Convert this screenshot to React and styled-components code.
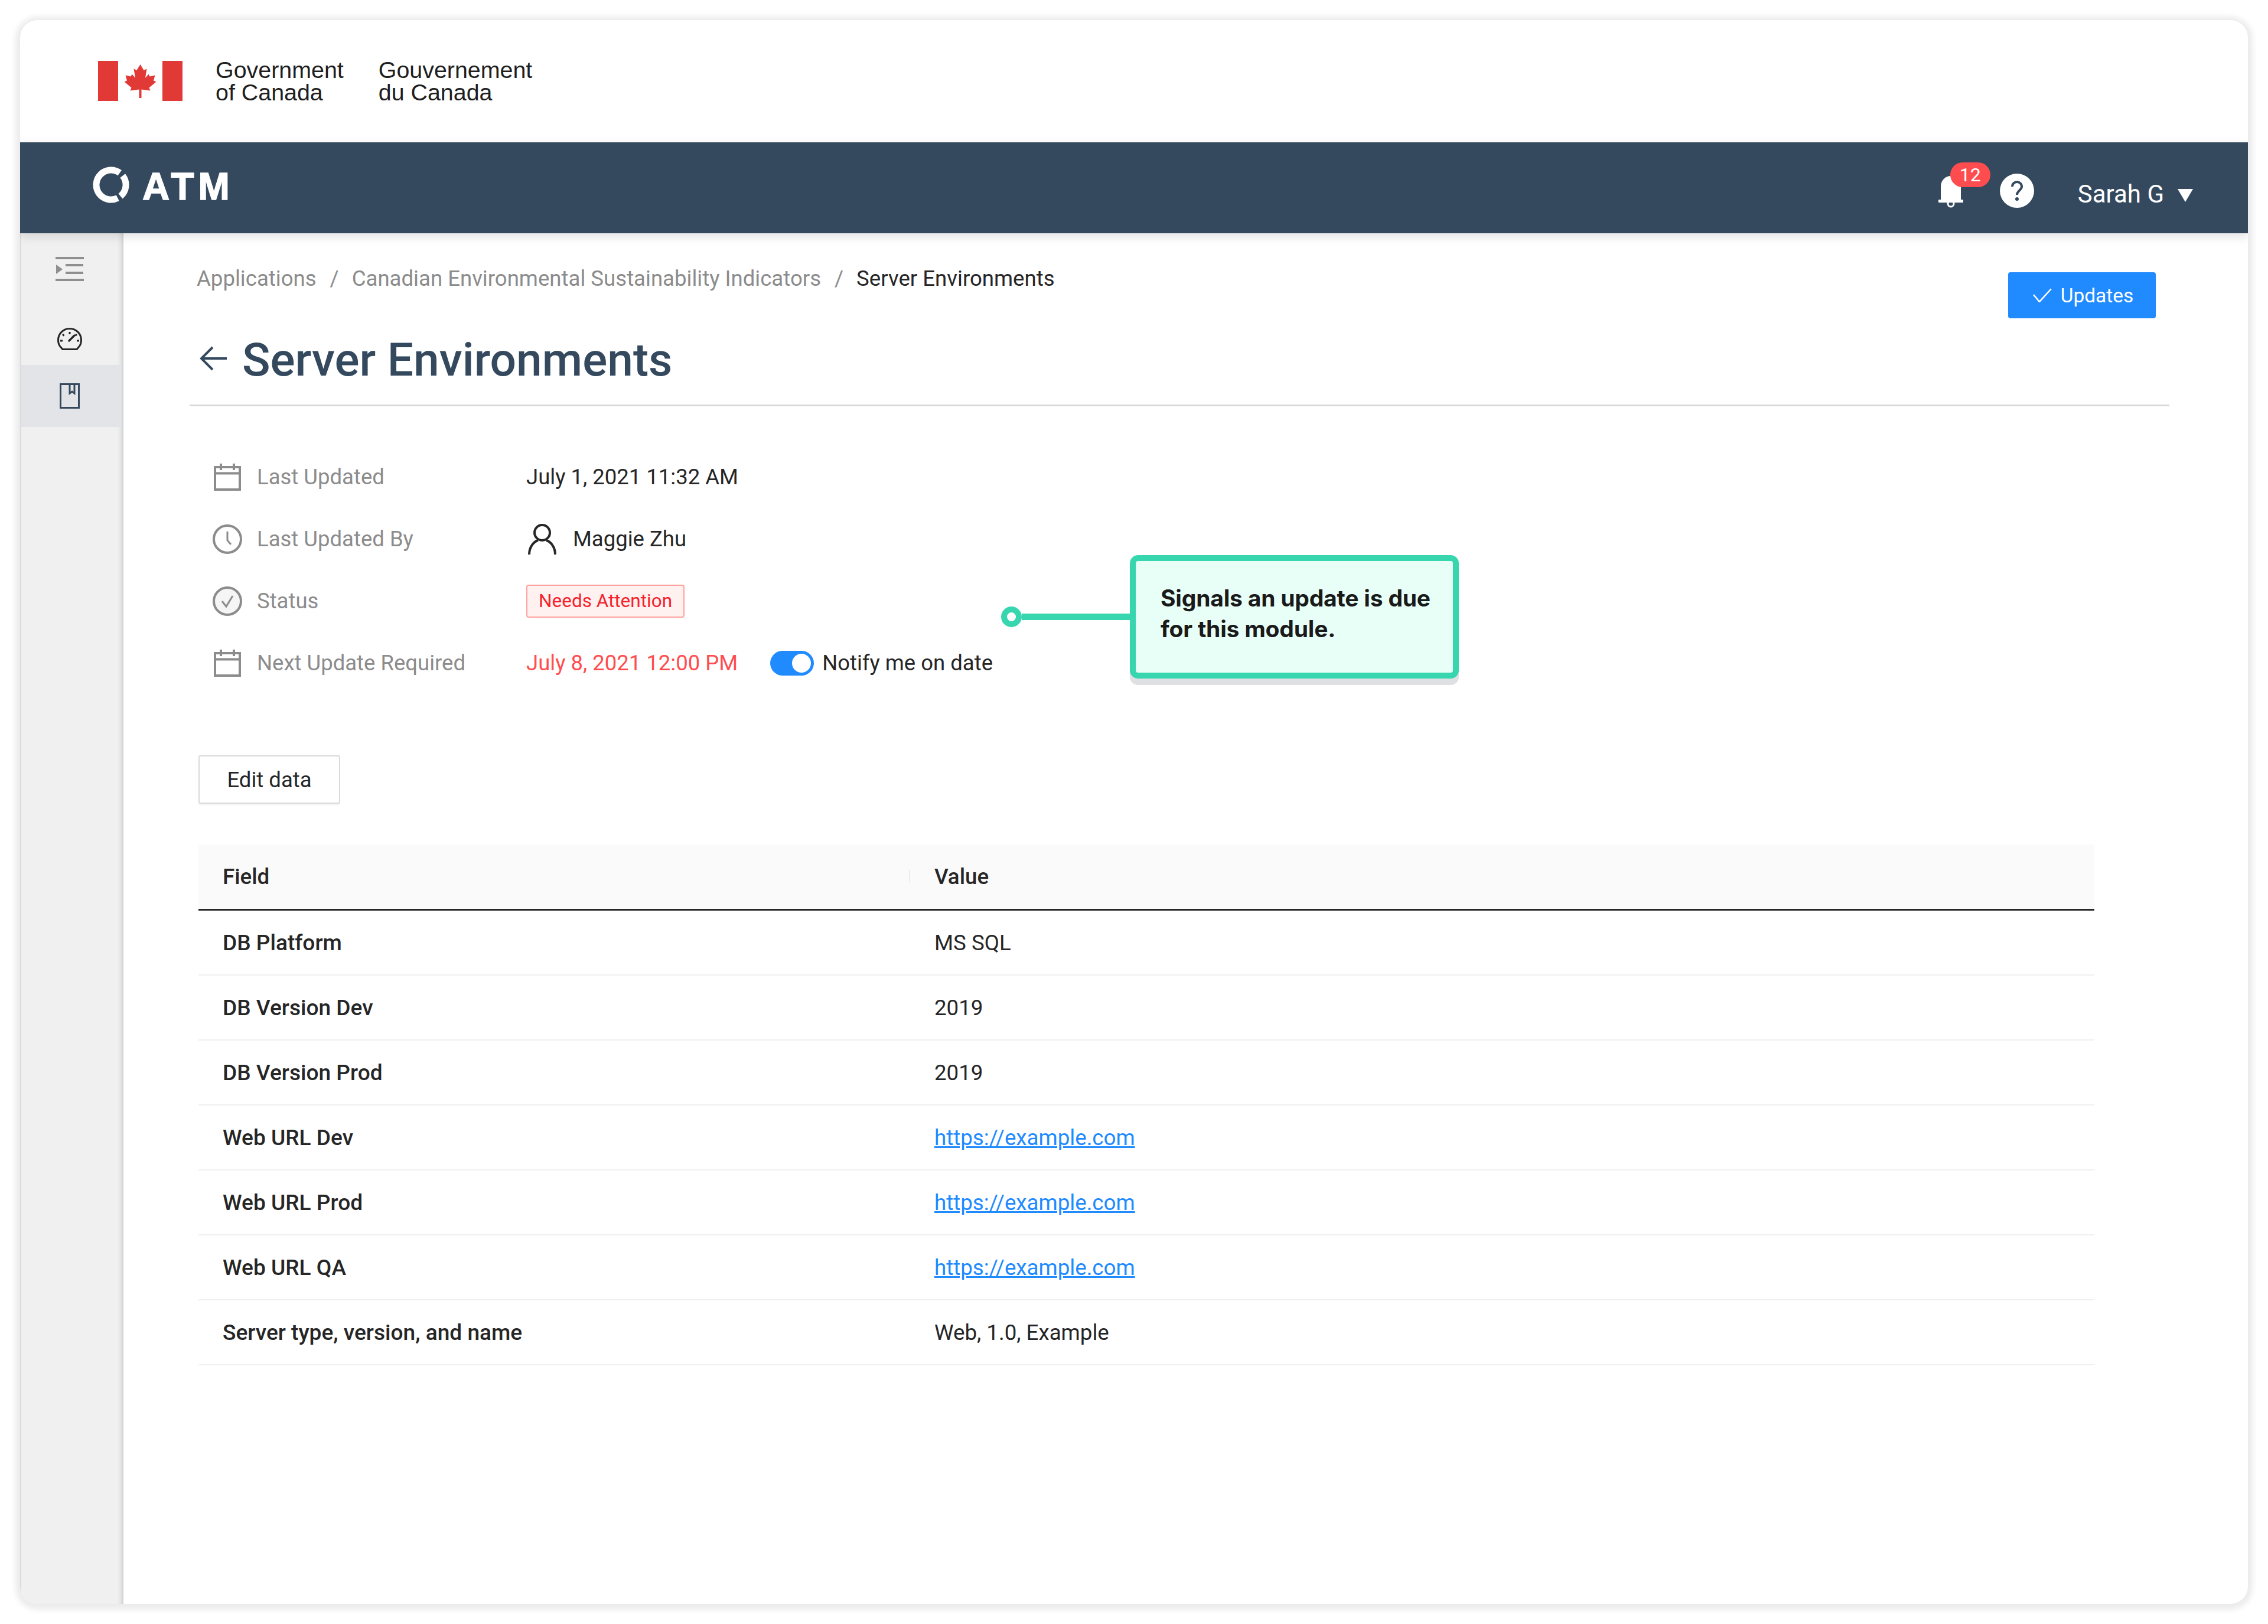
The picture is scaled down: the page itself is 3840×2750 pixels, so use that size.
import React from "react";
import styled, { createGlobalStyle } from "styled-components";

const NAVY = "#34495e";
const BLUE = "#208aff";
const RED = "#ff4d4f";
const TEAL = "#38d6ae";
const GRAY = "#8c8c8c";
const INK = "#262626";

const rows = [
  { field: "DB Platform", value: "MS SQL" },
  { field: "DB Version Dev", value: "2019" },
  { field: "DB Version Prod", value: "2019" },
  { field: "Web URL Dev", link: "https://example.com" },
  { field: "Web URL Prod", link: "https://example.com" },
  { field: "Web URL QA", link: "https://example.com" },
  { field: "Server type, version, and name", value: "Web, 1.0, Example" },
];

const CalendarIcon = () => (
  <svg width="46" height="46" viewBox="0 0 46 46" fill="none" stroke={GRAY} strokeWidth="4">
    <rect x="2" y="6" width="42" height="38" />
    <path d="M2 16.5h42M12 0v11M34 0v11" />
  </svg>
);

const ClockIcon = () => (
  <svg width="50" height="50" viewBox="0 0 50 50" fill="none" stroke={GRAY} strokeWidth="4">
    <circle cx="25" cy="25" r="23" />
    <path d="M25 12v15l6 7" strokeWidth="3" />
  </svg>
);

const CheckCircleIcon = () => (
  <svg width="50" height="50" viewBox="0 0 50 50" fill="#f5f5f5" stroke={GRAY} strokeWidth="4">
    <circle cx="25" cy="25" r="23" />
    <path d="M16 25l7 9 11-18" fill="none" strokeWidth="3" />
  </svg>
);

const UserIcon = () => (
  <svg width="50" height="52" viewBox="0 0 50 52" fill="none" stroke={INK} strokeWidth="4">
    <ellipse cx="25" cy="15" rx="13" ry="13" />
    <path d="M3 52c0-13 8-22 15-24M47 52c0-13-8-22-15-24" />
  </svg>
);

const Flag = () => (
  <svg width="143" height="68" viewBox="0 0 143 68">
    <g fill="#e13a36">
      <rect x="0" y="0" width="34" height="68" />
      <rect x="109" y="0" width="34" height="68" />
      <path
        transform="translate(71.5 6)"
        d="M0 0L6 10L11 7.5L8.5 23L14 16.5L16 20.5L25 18.5L22.5 27.5L27 29.5L15 39.5L17 44.5L2 42.5V57H-2V42.5L-17 44.5L-15 39.5L-27 29.5L-22.5 27.5L-25 18.5L-16 20.5L-14 16.5L-8.5 23L-11 7.5L-6 10Z"
      />
    </g>
  </svg>
);

const LogoMark = () => (
  <svg width="62" height="62" viewBox="0 0 62 62" fill="none" stroke="#fff" strokeWidth="11">
    <path d="M45.7 10.800A25 25 0 1 0 42.300 53.300" />
    <path d="M50.700 15.600A25 25 0 0 1 47.100 50.200" />
  </svg>
);

const BellIcon = () => (
  <svg width="42" height="54" viewBox="0 0 42 54">
    <path fill="#fff" d="M21 0c-9 0-17 7-17 18v22H1a1.500 1.500 0 0 0-1 2v2a1 1 0 0 0 1 1h40a1 1 0 0 0 1-1v-2a1.500 1.500 0 0 0-1-2h-3V18C38 7 30 0 21 0z" />
    <circle cx="21" cy="47" r="5" fill="none" stroke="#fff" strokeWidth="3" />
  </svg>
);

const HelpIcon = () => (
  <svg width="58" height="58" viewBox="0 0 58 58">
    <circle cx="29" cy="29" r="29" fill="#fff" />
    <path d="M21 22c0-5 4-8 8-8s8 3 8 8c0 6-8 7-8 14" fill="none" stroke={NAVY} strokeWidth="4" />
    <circle cx="29" cy="43" r="3" fill={NAVY} />
  </svg>
);

const CheckIcon = () => (
  <svg width="32" height="24" viewBox="0 0 32 24" fill="none" stroke="#fff" strokeWidth="2.5">
    <path d="M1 11l10 12L31 1" />
  </svg>
);

const BackArrow = () => (
  <svg width="46" height="42" viewBox="0 0 46 42" fill="none" stroke={NAVY} strokeWidth="4">
    <path d="M22 2L3 21l19 19M3 21h43" />
  </svg>
);

const IndentIcon = () => (
  <svg width="48" height="42" viewBox="0 0 48 42" fill="#8f8f8f">
    <rect x="0" y="0" width="48" height="4" />
    <rect x="17" y="12" width="30" height="4" />
    <rect x="17" y="25" width="30" height="4" />
    <rect x="0" y="37" width="48" height="4" />
    <path d="M1 13l11 8-11 8z" />
  </svg>
);

const GaugeIcon = () => (
  <svg width="42" height="38" viewBox="0 0 42 38" fill="none" stroke="#262626" strokeWidth="3">
    <path d="M9 36.500h24l3-3.500c3-3 4.500-7 4.500-12C40.500 10 32 1.500 21 1.500S1.500 10 1.500 21c0 5 1.500 9 4.500 12z" />
    <path d="M20 22l9-9" strokeWidth="3.500" strokeLinecap="round" />
    <path d="M21 7v4M9 11l2.500 2.500M33 11l-2.500 2.500M5 22h4M33 22h4" />
  </svg>
);

const BookIcon = () => (
  <svg width="34" height="43" viewBox="0 0 34 43" fill="none" stroke={NAVY} strokeWidth="3">
    <rect x="1.500" y="1.500" width="31" height="40" />
    <path d="M17 2v15l4-3 4 3V2" />
  </svg>
);

const App = () => {
  return (
    <>
      <GlobalStyle />
      <Page>
        <Card>
          <GovBar>
            <Flag />
            <GovName>
              Government
              <br />
              of Canada
            </GovName>
            <GovName>
              Gouvernement
              <br />
              du Canada
            </GovName>
          </GovBar>
          <NavBar>
            <Brand>
              <LogoMark />
              <BrandName>ATM</BrandName>
            </Brand>
            <NavActions>
              <BellWrap>
                <BellIcon />
                <Badge>12</Badge>
              </BellWrap>
              <HelpIcon />
              <UserMenu>
                Sarah G
                <Caret />
              </UserMenu>
            </NavActions>
          </NavBar>
          <Body>
            <Sidebar>
              <SideToggle>
                <IndentIcon />
              </SideToggle>
              <SideGauge>
                <GaugeIcon />
              </SideGauge>
              <SideActive>
                <BookIcon />
              </SideActive>
            </Sidebar>
            <Content>
              <TopBar>
                <div>
                  <Crumbs>
                    <Crumb>Applications</Crumb>
                    <CrumbSep>/</CrumbSep>
                    <Crumb>Canadian Environmental Sustainability Indicators</Crumb>
                    <CrumbSep>/</CrumbSep>
                    <Crumb $current>Server Environments</Crumb>
                  </Crumbs>
                  <TitleRow>
                    <BackArrow />
                    <Title>Server Environments</Title>
                  </TitleRow>
                </div>
                <UpdatesButton>
                  <CheckIcon />
                  Updates
                </UpdatesButton>
              </TopBar>
              <Details>
                <MetaGrid>
                  <MetaIcon>
                    <CalendarIcon />
                  </MetaIcon>
                  <MetaLabel>Last Updated</MetaLabel>
                  <MetaValue>July 1, 2021 11:32 AM</MetaValue>

                  <MetaIcon>
                    <ClockIcon />
                  </MetaIcon>
                  <MetaLabel>Last Updated By</MetaLabel>
                  <MetaValue>
                    <UserIcon />
                    <UserName>Maggie Zhu</UserName>
                  </MetaValue>

                  <MetaIcon>
                    <CheckCircleIcon />
                  </MetaIcon>
                  <MetaLabel>Status</MetaLabel>
                  <MetaValue>
                    <Tag>Needs Attention</Tag>
                  </MetaValue>

                  <MetaIcon>
                    <CalendarIcon />
                  </MetaIcon>
                  <MetaLabel>Next Update Required</MetaLabel>
                  <MetaValue $danger>
                    July 8, 2021 12:00 PM
                    <Toggle />
                    <ToggleLabel>Notify me on date</ToggleLabel>
                  </MetaValue>
                </MetaGrid>
                <Callout>
                  <CalloutDot />
                  <CalloutLine />
                  <CalloutBox>
                    Signals an update is due
                    <br />
                    for this module.
                  </CalloutBox>
                </Callout>
              </Details>
              <EditButton>Edit data</EditButton>
              <DataTable>
                <thead>
                  <tr>
                    <Th>Field</Th>
                    <Th $divider>Value</Th>
                  </tr>
                </thead>
                <tbody>
                  {rows.map((row) => (
                    <tr key={row.field}>
                      <FieldCell>{row.field}</FieldCell>
                      <ValueCell>{row.link ? <TableLink href="#">{row.link}</TableLink> : row.value}</ValueCell>
                    </tr>
                  ))}
                </tbody>
              </DataTable>
            </Content>
          </Body>
        </Card>
      </Page>
    </>
  );
};

export default App;

const GlobalStyle = createGlobalStyle`
  body {
    margin: 0;
    background: #fff;
    font-family: Roboto, "Liberation Sans", sans-serif;
    color: ${INK};
  }
  svg {
    display: block;
    flex-shrink: 0;
  }
`;

const Page = styled.div`
  width: 3840px;
  height: 2750px;
  padding: 34px;
  box-sizing: border-box;
`;

const Card = styled.div`
  height: 2682px;
  display: flex;
  flex-direction: column;
  background: #fff;
  border-radius: 30px;
  overflow: hidden;
  box-shadow: 0 2px 10px 8px rgba(0, 0, 0, 0.08);
`;

const GovBar = styled.header`
  height: 207px;
  flex-shrink: 0;
  padding: 69px 0 0 132px;
  box-sizing: border-box;
  display: flex;
  align-items: flex-start;
`;

const GovName = styled.div`
  margin-left: 56px;
  margin-top: -4px;
  font: 39.4px/38px "Liberation Sans", Arial, sans-serif;
  color: #1f1f1f;
  & + & {
    margin-left: 59px;
  }
`;

const NavBar = styled.nav`
  position: relative;
  z-index: 2;
  height: 154px;
  flex-shrink: 0;
  padding: 0 93px 0 123px;
  display: flex;
  align-items: center;
  justify-content: space-between;
  background: ${NAVY};
  box-shadow: 0 6px 16px rgba(0, 0, 0, 0.12);
`;

const Brand = styled.div`
  display: flex;
  align-items: center;
  gap: 22px;
  margin-top: -11px;
`;

const BrandName = styled.span`
  margin-top: 6px;
  font: 700 64px/1 "Liberation Sans", Arial, sans-serif;
  letter-spacing: 7px;
  -webkit-text-stroke: 1.5px #fff;
  color: #fff;
`;

const NavActions = styled.div`
  display: flex;
  align-items: center;
  margin-top: 10px;
  gap: 60px;
`;

const BellWrap = styled.div`
  position: relative;
  margin: 4px 2px 0 0;
`;

const Badge = styled.span`
  position: absolute;
  top: -23px;
  left: 20px;
  width: 68px;
  height: 42px;
  border-radius: 21px;
  background: ${RED};
  color: #fff;
  font-size: 32px;
  line-height: 42px;
  text-align: center;
`;

const UserMenu = styled.div`
  display: flex;
  align-items: center;
  gap: 23px;
  margin: 10px 0 0 14px;
  font-size: 42px;
  color: #fff;
`;

const Caret = styled.span`
  width: 0;
  height: 0;
  margin-top: 6px;
  border-left: 13px solid transparent;
  border-right: 13px solid transparent;
  border-top: 22px solid #fff;
`;

const Body = styled.div`
  flex: 1;
  display: flex;
  min-height: 0;
`;

const Sidebar = styled.aside`
  width: 175px;
  flex-shrink: 0;
  box-sizing: border-box;
  padding-top: 40px;
  display: flex;
  flex-direction: column;
  align-items: stretch;
  background: #f0f0f0;
  border-left: 2px solid #dcdcdc;
  border-right: 3px solid #d3d6d7;
  box-shadow: inset -7px 0 6px -4px rgba(0, 0, 0, 0.07);
`;

const SideToggle = styled.div`
  display: flex;
  justify-content: center;
  height: 42px;
  padding-right: 6px;
`;

const SideGauge = styled.div`
  display: flex;
  justify-content: center;
  margin-top: 78px;
  height: 63px;
  padding-right: 6px;
`;

const SideActive = styled.div`
  height: 105px;
  padding-right: 6px;
  display: flex;
  align-items: center;
  justify-content: center;
  background: #e3e4e7;
`;

const Content = styled.main`
  flex: 1;
  min-width: 0;
  padding: 0 260px 0 127px;
`;

const TopBar = styled.div`
  margin: 0 -127px 0 -15px;
  padding: 0 23px 31px 12px;
  display: flex;
  justify-content: space-between;
  align-items: flex-start;
  border-bottom: 3px solid #d9d9d9;
`;

const Crumbs = styled.div`
  padding-top: 55px;
  display: flex;
  font-size: 36.6px;
  line-height: 44px;
`;

const Crumb = styled.span`
  color: ${({ $current }) => ($current ? INK : GRAY)};
`;

const CrumbSep = styled.span`
  margin: 0 22px 0 23px;
  color: ${GRAY};
`;

const TitleRow = styled.div`
  margin-top: 70px;
  padding-left: 5px;
  display: flex;
  align-items: center;
  gap: 26px;
  svg {
    margin-top: -4px;
  }
`;

const Title = styled.h1`
  margin: 0;
  font-size: 78.5px;
  line-height: 90px;
  font-weight: 500;
  color: ${NAVY};
`;

const UpdatesButton = styled.button`
  width: 250px;
  height: 78px;
  margin-top: 66px;
  padding: 0 0 0 4px;
  display: flex;
  align-items: center;
  justify-content: center;
  gap: 15px;
  border: 0;
  border-radius: 4px;
  background: ${BLUE};
  color: #fff;
  font: 33.500px Roboto, sans-serif;
`;

const Details = styled.section`
  position: relative;
  padding-top: 67px;
`;

const MetaGrid = styled.div`
  display: grid;
  grid-template-columns: 52px 480px auto;
  grid-auto-rows: 105px;
  align-items: center;
  justify-content: start;
  margin-left: 23px;
  font-size: 36.500px;
`;

const MetaIcon = styled.div`
  display: flex;
  justify-content: center;
  width: 52px;
`;

const MetaLabel = styled.div`
  padding-left: 24px;
  color: ${GRAY};
`;

const MetaValue = styled.div`
  display: flex;
  align-items: center;
  color: ${({ $danger }) => ($danger ? RED : INK)};
  > svg {
    margin-left: 2px;
  }
`;

const UserName = styled.span`
  margin-left: 27px;
`;

const Tag = styled.span`
  height: 56px;
  padding: 0 19px;
  box-sizing: border-box;
  display: flex;
  align-items: center;
  border: 2px solid #ffa39e;
  border-radius: 4px;
  background: #fff1f0;
  color: #f5222d;
  font-size: 31.500px;
`;

const Toggle = styled.span`
  position: relative;
  width: 74px;
  height: 42px;
  margin-left: 55px;
  border-radius: 21px;
  background: ${BLUE};
  &::after {
    content: "";
    position: absolute;
    top: 5px;
    right: 5px;
    width: 32px;
    height: 32px;
    border-radius: 50%;
    background: #fff;
  }
`;

const ToggleLabel = styled.span`
  margin-left: 14px;
  color: ${INK};
`;

const Callout = styled.div`
  position: absolute;
  top: 252px;
  left: 1359px;
  display: flex;
  align-items: center;
`;

const CalloutDot = styled.span`
  width: 35px;
  height: 35px;
  box-sizing: border-box;
  border: 10px solid ${TEAL};
  border-radius: 50%;
`;

const CalloutLine = styled.span`
  width: 183px;
  height: 11px;
  background: ${TEAL};
`;

const CalloutBox = styled.div`
  width: 557px;
  height: 209px;
  padding: 37px 0 0 42px;
  box-sizing: border-box;
  border: 10px solid ${TEAL};
  border-radius: 14px;
  background: #e8fff7;
  box-shadow: 0 11px 0 #dfe0e4;
  font: 700 39px/52px Inter, sans-serif;
  letter-spacing: -0.2px;
  color: #1a1a1a;
`;

const EditButton = styled.button`
  display: block;
  width: 240px;
  height: 82px;
  margin-top: 104px;
  border: 2px solid #d9d9d9;
  border-radius: 3px;
  background: #fff;
  box-shadow: 0 3px 0 rgba(0, 0, 0, 0.03);
  color: ${INK};
  font: 36.500px Roboto, sans-serif;
`;

const DataTable = styled.table`
  width: 3210px;
  margin-top: 69px;
  border-collapse: separate;
  border-spacing: 0;
  table-layout: fixed;
  font-size: 36.700px;
`;

const Th = styled.th`
  position: relative;
  width: ${({ $divider }) => ($divider ? "auto" : "1203px")};
  height: 112px;
  box-sizing: border-box;
  padding: 0 0 0 ${({ $divider }) => ($divider ? "43px" : "41px")};
  background: #fafafa;
  border-bottom: 3px solid #262626;
  text-align: left;
  font-weight: 500;
  &::before {
    content: "";
    display: ${({ $divider }) => ($divider ? "block" : "none")};
    position: absolute;
    left: 0;
    top: 43px;
    width: 2px;
    height: 22px;
    background: #ececec;
  }
`;

const FieldCell = styled.td`
  height: 110px;
  box-sizing: border-box;
  padding: 0 0 0 41px;
  border-bottom: 2px solid #f0f0f0;
  font-weight: 500;
  font-size: 37.100px;
`;

const ValueCell = styled.td`
  height: 110px;
  box-sizing: border-box;
  padding: 0 0 0 43px;
  border-bottom: 2px solid #f0f0f0;
`;

const TableLink = styled.a`
  color: ${BLUE};
  text-decoration: underline;
`;
